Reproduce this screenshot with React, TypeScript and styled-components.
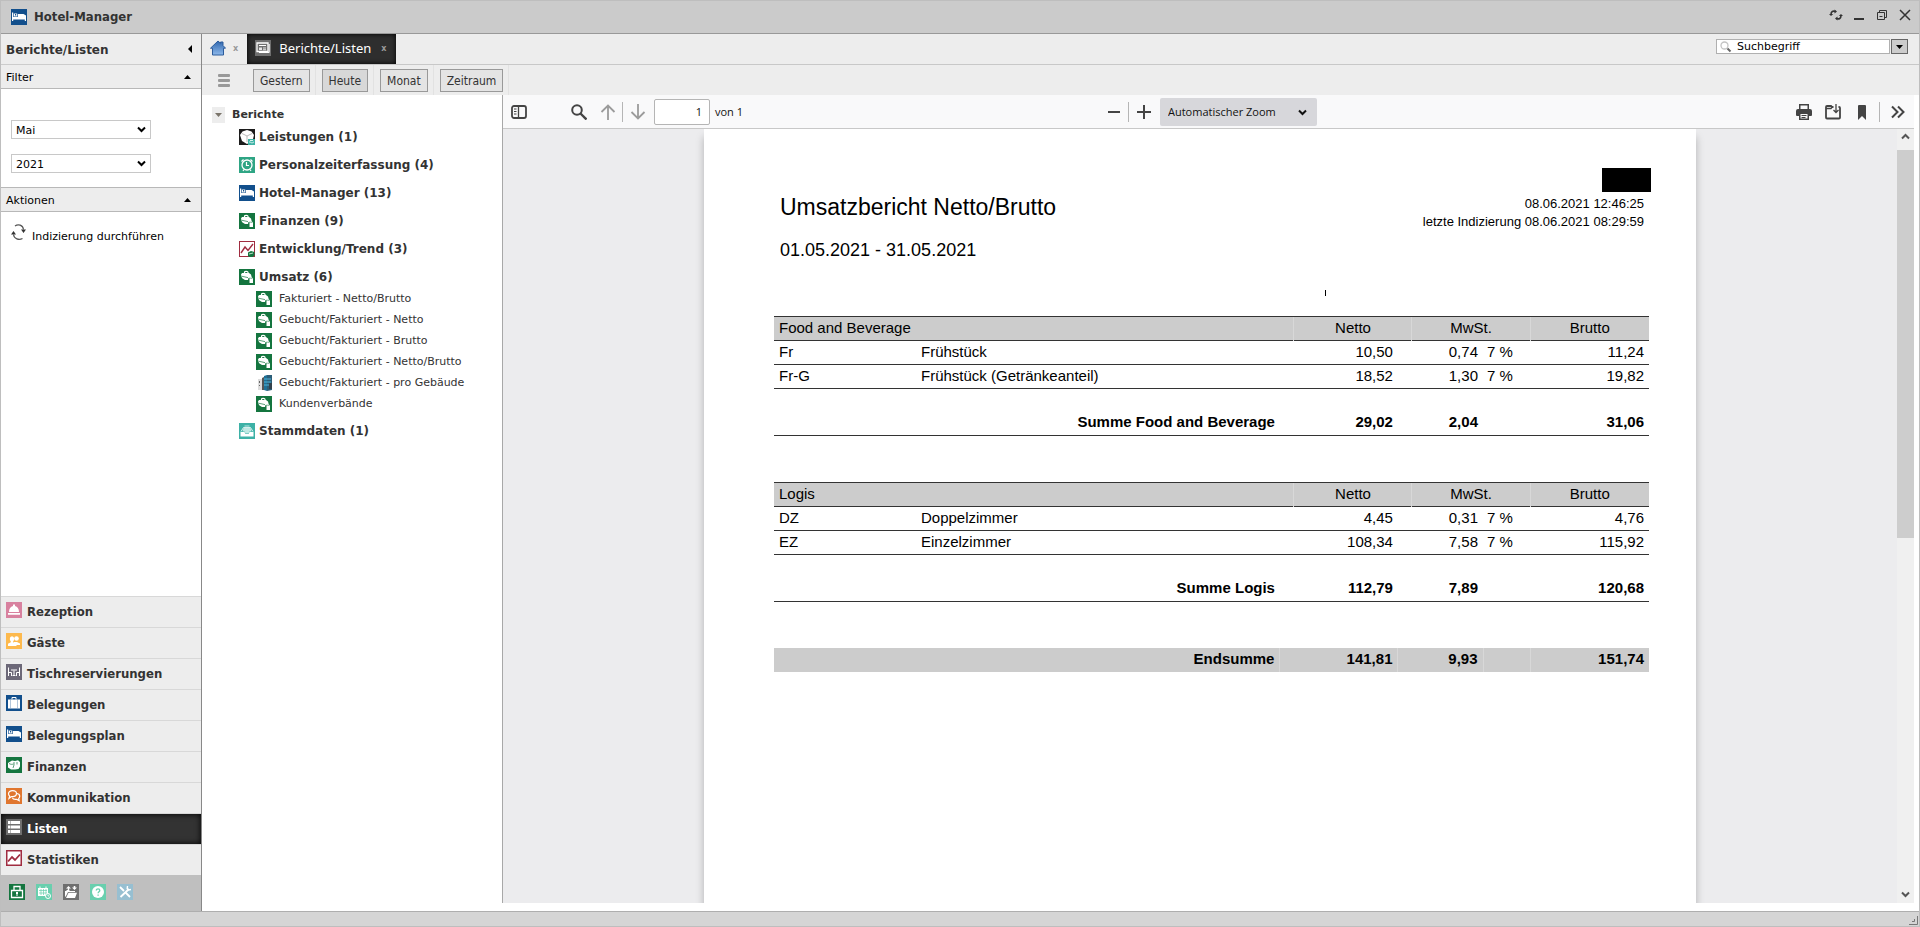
import React from 'react';
import styled, { createGlobalStyle } from 'styled-components';

const wide = '"DejaVu Sans", Verdana, sans-serif';
const narrow = '"DejaVu Sans Condensed", Tahoma, "DejaVu Sans", sans-serif';
const doc = '"Liberation Sans", Arial, sans-serif';
const humanist = '"Open Sans", "Segoe UI", sans-serif';

const GlobalStyle = createGlobalStyle`
  *, *::before, *::after { box-sizing: border-box; }
  html, body, #root { height: 100%; }
  body { margin: 0; background: #fff; color: #333; font-family: ${wide}; font-size: 11px; }
  button, select, input { font: inherit; color: inherit; margin: 0; border-radius: 0; }
  button { padding: 0; border: 0; background: none; cursor: pointer; }
  svg { display: block; flex: none; }
  ul { list-style: none; margin: 0; padding: 0; }
  h1, h2, p { margin: 0; }
`;

/* ---------- icons ---------- */

type IconName =
  | 'bed' | 'box' | 'clock' | 'cash' | 'trend' | 'building' | 'inbox' | 'bell' | 'guests' | 'dining'
  | 'case' | 'coins' | 'chat' | 'list' | 'stats' | 'lock' | 'calendar' | 'transfer' | 'help' | 'tools' | 'news';

const glyphs: Record<IconName, { bg: string; art: React.ReactNode }> = {
  bed: {
    bg: '#124f8c',
    art: (
      <>
        <path d="M1 3.500h1.200V8H15v4h-1.200v-1.500H2.200V12H1z" fill="#fff" />
        <path d="M2.800 4.500h3.400v3H2.800z" fill="#fff" />
        <path d="M4 5h1.200v1.500H4z" fill="#124f8c" />
        <path d="M6.800 5h5.700L15 6.500V8.500H6.800z" fill="#fff" />
      </>
    ),
  },
  box: {
    bg: '#1c1c1c',
    art: (
      <>
        <path d="M8 1l4.500 1.500L15 6l-1.500 6L8 15l-5-3L1 6l2.500-3.500z" fill="#fff" />
        <path d="M3 4.500l5 2.500 5-2.500M8 7v6" stroke="#aaa" fill="none" strokeWidth=".8" />
        <path d="M9 10h7v6H9z" fill="#3fb3a6" />
        <path d="M10 13h1.500l1 1h1l1-1H15M11 11.500h3" stroke="#fff" fill="none" strokeWidth=".8" />
      </>
    ),
  },
  clock: {
    bg: '#2ea584',
    art: (
      <g fill="none" stroke="#fff">
        <circle cx="8" cy="8" r="5" strokeWidth="1.300" />
        <path d="M7.500 5V8.500H10M2.500 4.500l2-2M13.500 4.500l-2-2M4 14l1-1.500M12 14l-1-1.500" strokeWidth="1.200" />
      </g>
    ),
  },
  cash: {
    bg: '#14753f',
    art: (
      <>
        <path d="M5.500 4.500V3.200C5.500 2 9 2 9 3.200v1.300" fill="none" stroke="#fff" strokeWidth="1.200" />
        <path d="M2 5.500L3 4h7l2 1.500.8 3-3.300.5-.5 2H6L3.500 9.500 2.500 8z" fill="#fff" />
        <path d="M2.500 7.200L9 8.600" stroke="#14753f" strokeWidth=".7" />
        <path d="M10.500 9.500h3.500V14h-3.500z" fill="#fff" />
        <path d="M11 9.500c0-1.200 2.500-1.200 2.500 0" fill="none" stroke="#fff" strokeWidth=".8" />
      </>
    ),
  },
  trend: {
    bg: '#a02c40',
    art: (
      <>
        <path d="M1 1h14v14H1z" fill="#fff" />
        <path d="M2 12l4-6 3 3.500 5-6.500" fill="none" stroke="#a02c40" strokeWidth="1.400" />
        <path d="M9 11.500l3-1.500 3.500 1v3.500L13.500 16H10l-1-1z" fill="#14753f" />
        <path d="M10 13l4-1" stroke="#b9dcc6" strokeWidth="1" />
      </>
    ),
  },
  building: {
    bg: 'transparent',
    art: (
      <>
        <path d="M2 4h4v11H2z" fill="#dcdcdc" />
        <path d="M3 6h1v2H3zM3 10h1v1H3z" fill="#666" />
        <path d="M6 3l2-1v13H6z" fill="#555" />
        <path d="M8 1l3-1v16l-3-1z" fill="#1f7096" />
        <path d="M11 0h5v15l-5 1z" fill="#2b5d77" />
        <path d="M8 4h7M8 7h7M8 10h5" stroke="#4fb4d9" />
        <path d="M13 8h3v6h-3z" fill="#33424c" />
      </>
    ),
  },
  inbox: {
    bg: '#3db1a6',
    art: (
      <>
        <path d="M1.500 9h4l1 2h3l1-2h4v4.500h-13z" fill="#fff" />
        <path d="M2 8.500l2.500-4h7l2.500 4" fill="none" stroke="#fff" strokeWidth=".8" />
        <path d="M4.500 5h7l1 3.500h-2l-1 2h-3l-1-2h-2z" fill="#bfe8e3" />
        <path d="M5.500 3h5" stroke="#bfe8e3" />
      </>
    ),
  },
  bell: {
    bg: '#d8819f',
    art: <path d="M7 2.500h2V4c2.500.5 4 3 4 6H3c0-3 1.500-5.500 4-6zM2 11h12v1.700H2z" fill="#fff" />,
  },
  guests: {
    bg: '#fdb94d',
    art: (
      <g fill="#fff">
        <circle cx="10.500" cy="5.500" r="2.300" />
        <path d="M8 9h3l3 1.500v1.500H8z" />
        <path d="M6 3.200a2.300 2.500 0 0 1 2.200 2.500c0 1.200-.4 1.900-1 2.600v.9l3.300 1.500v2.200H2v-2.200l2.800-1.500v-.9c-.6-.7-1-1.400-1-2.600A2.300 2.500 0 0 1 6 3.200z" />
      </g>
    ),
  },
  dining: {
    bg: '#6c6878',
    art: (
      <g stroke="#fff" fill="none">
        <path d="M5 6h6M8 6.500v4.500M6.500 11.500h3" />
        <path d="M2.500 3.500v8.500M2.500 8.500H5.500V12M13.500 3.500v8.500M13.500 8.500H10.500V12" />
      </g>
    ),
  },
  case: {
    bg: '#124f8c',
    art: (
      <>
        <path d="M2 4.500h12v9H2z" fill="#fff" />
        <path d="M6 4.500v-2h4v2" stroke="#fff" fill="none" />
        <path d="M4.500 4.500v9M11.500 4.500v9" stroke="#7e9fc2" strokeWidth=".6" />
      </>
    ),
  },
  coins: {
    bg: '#14753f',
    art: (
      <>
        <path d="M2 6l4-2.500L9 4l3-.8 2 1.800v4.500L12.500 12 9 12.500H5L2 10.500z" fill="#fff" />
        <path d="M3 6.500c1.500 1 3.500 1 4.500.5M8 5v3l-1 3M11 5v2.500" stroke="#14753f" fill="none" strokeWidth=".7" />
      </>
    ),
  },
  chat: {
    bg: '#e0762f',
    art: (
      <g stroke="#fff" fill="none" strokeWidth="1.200">
        <path d="M6.500 2.600c2.300 0 4 1.300 4 3s-1.700 3-4 3H5.500L3 10.500l.7-2.300C2.900 7.500 2.500 6.600 2.500 5.600c0-1.700 1.700-3 4-3z" />
        <path d="M11 5.500c1.600.3 2.700 1.300 2.700 2.700 0 .9-.4 1.600-1 2.200l.5 2.300-2.400-1.300H9.300c-1.500 0-2.500-.6-3-1.700" />
      </g>
    ),
  },
  list: {
    bg: '#6f6f6f',
    art: <path d="M2 2h2.500v3H2zM5 2h9v3H5zM2 6.500h2.500v3H2zM5 6.500h9v3H5zM2 11h2.500v3H2zM5 11h9v3H5z" fill="#fff" />,
  },
  stats: {
    bg: '#a02c40',
    art: (
      <>
        <path d="M1.500 1.500h13v13h-13z" fill="#fff" />
        <path d="M2 11.500l4-4.500 3 3 5-5.500" fill="none" stroke="#a02c40" strokeWidth="1.800" />
      </>
    ),
  },
  lock: {
    bg: '#14753f',
    art: (
      <>
        <path d="M2.500 6.500h11v7h-11zM5 6V2.500h6V6" stroke="#fff" fill="none" strokeWidth="1.300" />
        <path d="M7 8h2v2H8.500v2h-1v-2H7z" fill="#fff" />
      </>
    ),
  },
  calendar: {
    bg: '#69cfae',
    art: (
      <>
        <path d="M2 4h10v8H2z" fill="#fff" />
        <path d="M3 6.500h8M3 9h8M5 5v6M7.500 5v6M10 5v6" stroke="#69cfae" strokeWidth=".7" />
        <path d="M4 2.500V4M10 2.500V4" stroke="#fff" />
        <circle cx="12" cy="12" r="2.500" fill="#69cfae" stroke="#fff" />
        <path d="M12 10.500V12h1" stroke="#fff" fill="none" strokeWidth=".8" />
      </>
    ),
  },
  transfer: {
    bg: '#6f6f6f',
    art: (
      <path
        d="M2 7h1.500V6H6l1 1h5v1H5l-2 4-1 1zM5.500 8.800H14L12 14H3zM5.500 2L8 4.500H6.200V6H4.800V4.500H3zM11.500 6L14 3.500h-1.700V2h-1.600v1.500H9z"
        fill="#fff"
      />
    ),
  },
  help: {
    bg: '#69cfae',
    art: (
      <>
        <circle cx="8" cy="8" r="6" fill="#fff" />
        <path d="M6.300 6.500c0-2.200 3.500-2.200 3.500 0 0 1.300-1.700 1.300-1.700 2.700M8.100 10.500v1.300" stroke="#69cfae" fill="none" strokeWidth="1.300" />
      </>
    ),
  },
  tools: {
    bg: '#97bfd1',
    art: (
      <>
        <path d="M3 3l4 4M8.500 8.500L13 13" stroke="#fff" strokeWidth="1.800" />
        <path d="M12 5L3.500 13" stroke="#fff" strokeWidth="1.800" />
        <path d="M10.500 2l-.3 2.800 1.500 1.200L14 5.500" stroke="#fff" fill="none" strokeWidth="1.400" />
      </>
    ),
  },
  news: {
    bg: '#6f6f6f',
    art: (
      <>
        <path d="M2 3h11v8.500H2z" fill="none" stroke="#fff" strokeWidth="1.300" />
        <path d="M4 5.500h7M14.200 4v8.500H4" stroke="#fff" fill="none" />
        <path d="M4 7.500h3v2.500H4zM8 7.500h3v1H8zM8 9.300h3v1H8z" fill="#e6e6e6" />
      </>
    ),
  },
};

const Glyph = ({ name }: { name: IconName }) => (
  <svg width="16" height="16" viewBox="0 0 16 16" aria-hidden="true">
    <rect width="16" height="16" fill={glyphs[name].bg} />
    {glyphs[name].art}
  </svg>
);

const Triangle = ({ dir, color = '#000' }: { dir: 'up' | 'down' | 'left'; color?: string }) => {
  const d = { up: 'M1 6l3.500-4L8 6z', down: 'M1 2l3.500 4L8 2z', left: 'M6 0v8L2 4z' }[dir];
  return (
    <svg width="9" height="8" viewBox="0 0 9 8" aria-hidden="true">
      <path d={d} fill={color} />
    </svg>
  );
};

const HomeIcon = () => (
  <svg width="16" height="16" viewBox="0 0 16 16" aria-hidden="true">
    <defs>
      <linearGradient id="house" x1="0" y1="0" x2="0" y2="1">
        <stop offset="0" stopColor="#2f66ad" />
        <stop offset="1" stopColor="#8db8ea" />
      </linearGradient>
    </defs>
    <path d="M8 1l2.500 2.300V2H13v3.500l2.500 2.700H13.500V15h-11V8.200H.5z" fill="url(#house)" stroke="#2c5c9c" />
  </svg>
);

const ReloadIcon = () => (
  <svg width="16" height="16" viewBox="0 0 16 16" fill="none" stroke="#555" strokeWidth="1.200" aria-hidden="true">
    <path d="M4 2C7-.3 12 .8 12.500 5.500M11.500 14.500C8 16.300 3 15 2.500 10.500" />
    <path d="M10 5.500h5L12.500 9zM0 10.500h5L2.500 7z" fill="#333" stroke="none" />
  </svg>
);

/* ---------- window ---------- */

const Window = styled.div`
  display: flex;
  flex-direction: column;
  min-height: 100vh;
  border: 1px solid #bebebe;
`;
const TitleBar = styled.header`
  display: flex;
  align-items: center;
  height: 33px;
  padding: 0 6px 0 10px;
  gap: 7px;
  background: #cbcbcb;
  border-bottom: 1px solid #999;
`;
const WindowTitle = styled.h1`
  flex: 1;
  font: bold 13px/18px ${narrow};
`;
const WindowButton = styled.button`
  width: 16px;
  height: 16px;
  display: grid;
  place-items: start center;
`;
const Body = styled.div`
  display: flex;
  flex: 1;
`;
const StatusBar = styled.footer`
  height: 15px;
  display: flex;
  align-items: flex-end;
  justify-content: flex-end;
  background: #d5d5d5;
  border-top: 1px solid #aeaeae;
`;

/* ---------- sidebar ---------- */

const Sidebar = styled.aside`
  width: 201px;
  flex: none;
  display: flex;
  flex-direction: column;
  border-right: 1px solid #888;
  color: #000;
`;
const SidebarHead = styled.div<{ $main?: boolean }>`
  display: flex;
  align-items: center;
  justify-content: space-between;
  height: ${(p) => (p.$main ? 31 : 24)}px;
  padding: 0 ${(p) => (p.$main ? 6 : 9)}px 0 5px;
  background: #ededed;
  border-bottom: 1px solid ${(p) => (p.$main ? '#ccc' : '#b8b8b8')};
  h2 {
    padding-top: 2px;
    font-size: ${(p) => (p.$main ? 12 : 11)}px;
    line-height: 16px;
    font-weight: ${(p) => (p.$main ? 'bold' : 'normal')};
    color: ${(p) => (p.$main ? '#333' : '#000')};
  }
`;
const Filters = styled.div`
  display: flex;
  flex-direction: column;
  gap: 15px;
  padding: 31px 10px 14px;
  border-bottom: 1px solid #b8b8b8;
`;
const SelectShell = styled.label`
  position: relative;
  width: 140px;
  svg {
    position: absolute;
    right: 5px;
    top: 5px;
    pointer-events: none;
  }
`;
const FilterSelect = styled.select`
  display: block;
  appearance: none;
  width: 100%;
  height: 19px;
  padding: 2px 20px 0 4px;
  border: 1px solid #c8c8c8;
  background: #fff;
  outline: none;
`;
const ActionArea = styled.div`
  flex: 1;
  padding: 12px 10px;
`;
const Action = styled.button`
  display: flex;
  align-items: flex-start;
  gap: 5px;
  line-height: 25px;
`;
const NavItem = styled.a<{ $active?: boolean }>`
  display: flex;
  gap: 5px;
  height: 31px;
  padding: 5px 5px 0;
  text-decoration: none;
  border-top: 1px solid #d8d8d8;
  font: bold 13px/20px ${narrow};
  color: ${(p) => (p.$active ? '#fff' : '#333')};
  background: ${(p) => (p.$active ? '#333' : '#ededed')};
  box-shadow: ${(p) => (p.$active ? 'inset 0 0 6px #000' : 'none')};
`;
const QuickBar = styled.div`
  display: flex;
  align-items: flex-start;
  gap: 11px;
  height: 36px;
  padding: 9px 8px 0;
  background: #bfbfbf;
`;

/* ---------- main ---------- */

const Main = styled.main`
  flex: 1;
  min-width: 0;
  display: flex;
  flex-direction: column;
`;
const TabBar = styled.div`
  display: flex;
  height: 31px;
  background: #ededed;
  border-bottom: 1px solid #c8c8c8;
`;
const Tab = styled.div<{ $active?: boolean }>`
  display: flex;
  align-items: center;
  height: 30px;
  padding: 0 9px 2px 8px;
  gap: ${(p) => (p.$active ? 8 : 5)}px;
  font: 13px/18px "Noto Sans", sans-serif;
  color: #fff;
  background: ${(p) => (p.$active ? '#2e2e2e' : 'transparent')};
  box-shadow: ${(p) => (p.$active ? 'inset 0 0 5px #000' : 'none')};
`;
const TabClose = styled.button`
  font: bold 9px/12px ${narrow};
  color: #999;
  margin-left: 2px;
`;
const SearchBox = styled.form`
  display: flex;
  gap: 1px;
  margin: 5px 11px 0 auto;
  height: 15px;
`;
const SearchField = styled.label`
  display: flex;
  align-items: center;
  gap: 5px;
  width: 174px;
  padding-left: 3px;
  background: #fff;
  border: 1px solid #b0b0b0;
  color: #000;
  input {
    width: 100%;
    height: 13px;
    padding: 0;
    border: 0;
    outline: 0;
    background: none;
  }
`;
const SearchMenu = styled.button`
  width: 17px;
  display: grid;
  place-items: center;
  background: #ccc;
  border: 1px solid #666;
`;
const ToolBar = styled.div`
  display: flex;
  align-items: center;
  height: 30px;
  background: #ededed;
`;
const MenuButton = styled.button`
  margin: 0 11px 0 10px;
  padding: 0 6px;
`;
const ToolCell = styled.div`
  display: flex;
  align-items: center;
  height: 30px;
  padding: 0 5px 0 6px;
  border-right: 1px solid #e2e2e2;
`;
const ToolButton = styled.button<{ $on?: boolean }>`
  height: 23px;
  padding: 1px 6px 0;
  border: 1px solid #999;
  background: ${(p) => (p.$on ? '#d8d8d8' : '#e4e4e4')};
  font: 12px/18px ${narrow};
`;
const Work = styled.div`
  flex: 1;
  display: flex;
`;

/* ---------- report tree ---------- */

const Tree = styled.nav`
  width: 300px;
  flex: none;
  padding: 11px 10px 10px;
`;
const Root = styled.div`
  display: flex;
  align-items: center;
  gap: 7px;
  height: 17px;
  line-height: 14px;
  font-weight: bold;
`;
const Toggle = styled.button`
  width: 13px;
  height: 16px;
  display: grid;
  place-items: center;
  background: #ededed;
`;
const Branch = styled.li`
  padding: 6px 0 0 27px;
`;
const BranchLink = styled.a`
  display: flex;
  gap: 4px;
  height: 22px;
  font-size: 12px;
  line-height: 16px;
  font-weight: bold;
  color: #333;
  text-decoration: none;
`;
const Leaf = styled.a`
  display: flex;
  gap: 7px;
  height: 21px;
  margin-left: 17px;
  line-height: 16px;
  color: #333;
  text-decoration: none;
`;

/* ---------- document viewer ---------- */

const Viewer = styled.section`
  flex: 1;
  min-width: 0;
  display: flex;
  flex-direction: column;
  margin: 0 5px 8px 0;
  border-left: 1px solid #a8a8a8;
`;
const ViewerBar = styled.div`
  display: grid;
  grid-template-columns: 1fr auto 1fr;
  align-items: center;
  height: 34px;
  padding: 0 2px 0 1px;
  background: #f9f9fa;
  border-bottom: 1px solid #c8c8c8;
  font: 11px/18px ${humanist};
  color: #111;
`;
const BarGroup = styled.div<{ $end?: boolean }>`
  display: flex;
  align-items: center;
  justify-content: ${(p) => (p.$end ? 'flex-end' : 'flex-start')};
`;
const BarButton = styled.button<{ $dim?: boolean }>`
  width: 29px;
  height: 28px;
  display: grid;
  place-items: center;
  color: ${(p) => (p.$dim ? '#9b9b9b' : '#444')};
`;
const Divider = styled.span<{ $wide?: boolean }>`
  width: 1px;
  height: 20px;
  margin: 0 ${(p) => (p.$wide ? 3 : 0)}px;
  background: #b5b5b5;
`;
const Spacer = styled.span`
  width: 31px;
`;
const PageInput = styled.input`
  width: 56px;
  height: 26px;
  margin: 0 5px 0 2px;
  padding: 0 7px;
  border: 1px solid #b5b5b5;
  border-radius: 2px;
  background: #fff;
  text-align: right;
`;
const ZoomShell = styled.label`
  position: relative;
  margin-left: 2px;
  svg {
    position: absolute;
    right: 10px;
    top: 10px;
    pointer-events: none;
  }
`;
const ZoomSelect = styled.select`
  display: block;
  appearance: none;
  width: 157px;
  height: 28px;
  padding: 0 24px 0 8px;
  border: 0;
  border-radius: 2px;
  background: #d7d7db;
`;
const Canvas = styled.div`
  flex: 1;
  display: flex;
  background: #ececee;
`;
const Sheet = styled.article`
  width: 100%;
  max-width: 992px;
  margin: 0 auto;
  padding: 39px 47px 0 70px;
  background: #fff;
  box-shadow: 0 8px 8px rgba(0, 0, 0, 0.25);
  clip-path: inset(0 -10px 0 -10px);
  font-family: ${doc};
  color: #000;
`;
const ScrollTrack = styled.div`
  width: 17px;
  flex: none;
  display: flex;
  flex-direction: column;
  align-items: center;
  background: #f0f0f0;
  color: #555;
`;
const ScrollButton = styled.button<{ $end?: boolean }>`
  width: 17px;
  height: 21px;
  padding: ${(p) => (p.$end ? '4px 0 0' : '0 0 6px')};
  display: grid;
  place-items: center;
`;
const ScrollArea = styled.div`
  flex: 1;
  width: 100%;
`;
const Thumb = styled.div`
  height: 53%;
  background: #cdcdcd;
`;
const ReportHead = styled.header`
  display: flex;
  justify-content: space-between;
  padding-left: 6px;
  height: 122px;
`;
const Titles = styled.div`
  padding-top: 24px;
  h2 { font: 23px/30px ${doc}; margin-bottom: 16px; }
  p { font-size: 18px; line-height: 24px; }
`;
const Stamp = styled.div`
  display: flex;
  flex-direction: column;
  align-items: flex-end;
  font-size: 13px;
  line-height: 18px;
  p { padding-right: 5px; }
`;
const Redaction = styled.div`
  width: 49px;
  height: 24px;
  margin: 0 -2px 3px 0;
  background: #000;
`;
const Caret = styled.div`
  width: 1px;
  height: 6px;
  margin: 0 0 20px 551px;
  background: #000;
`;
const Table = styled.table`
  width: 100%;
  table-layout: fixed;
  border-collapse: collapse;
  font-size: 15px;
  line-height: 18px;
  margin-bottom: 46px;
  th, td { height: 24px; padding: 0 5px 2px; text-align: left; white-space: nowrap; }
  td.num { text-align: right; }
  td.pct { padding: 0 4px 2px; }
  thead th {
    font-weight: normal;
    background: #ccc;
    border-top: 1px solid #333;
    text-align: center;
    & + th { border-left: 1px solid #d8d8d8; }
    &:first-child { text-align: left; }
  }
  thead tr, tbody tr { border-bottom: 1px solid #333; }
  tfoot { font-weight: bold; }
  tfoot th, tfoot td { height: 47px; padding-top: 22px; text-align: right; }
  tfoot tr { border-bottom: 1px solid #333; }
`;
const TotalTable = styled(Table)`
  tbody { font-weight: bold; }
  tbody tr { border: 0; background: #ccc; }
  tbody th { text-align: right; }
  td { border-left: 1px solid #d8d8d8; }
`;

const columns = [142, 364, 14, 104, 14, 71, 47, 119];
const Columns = () => (
  <colgroup>
    {columns.map((w, i) => (
      <col key={i} width={i === 1 ? undefined : w} />
    ))}
  </colgroup>
);

type Line = [code: string, name: string, net: string, tax: string, rate: string, gross: string];
const sections: { title: string; lines: Line[]; sum: [string, string, string] }[] = [
  {
    title: 'Food and Beverage',
    lines: [
      ['Fr', 'Frühstück', '10,50', '0,74', '7 %', '11,24'],
      ['Fr-G', 'Frühstück (Getränkeanteil)', '18,52', '1,30', '7 %', '19,82'],
    ],
    sum: ['29,02', '2,04', '31,06'],
  },
  {
    title: 'Logis',
    lines: [
      ['DZ', 'Doppelzimmer', '4,45', '0,31', '7 %', '4,76'],
      ['EZ', 'Einzelzimmer', '108,34', '7,58', '7 %', '115,92'],
    ],
    sum: ['112,79', '7,89', '120,68'],
  },
];

const Report = () => (
  <Sheet>
    <ReportHead>
      <Titles>
        <h2>Umsatzbericht Netto/Brutto</h2>
        <p>01.05.2021 - 31.05.2021</p>
      </Titles>
      <Stamp>
        <Redaction />
        <p>08.06.2021 12:46:25</p>
        <p>letzte Indizierung 08.06.2021 08:29:59</p>
      </Stamp>
    </ReportHead>
    <Caret />
    {sections.map((s) => (
      <Table key={s.title}>
        <Columns />
        <thead>
          <tr>
            <th colSpan={3}>{s.title}</th>
            <th colSpan={2}>Netto</th>
            <th colSpan={2}>MwSt.</th>
            <th>Brutto</th>
          </tr>
        </thead>
        <tbody>
          {s.lines.map(([code, name, net, tax, rate, gross]) => (
            <tr key={code}>
              <td>{code}</td>
              <td>{name}</td>
              <td className="num" colSpan={2}>{net}</td>
              <td className="num" colSpan={2}>{tax}</td>
              <td className="pct">{rate}</td>
              <td className="num">{gross}</td>
            </tr>
          ))}
        </tbody>
        <tfoot>
          <tr>
            <th colSpan={2}>Summe {s.title}</th>
            <td colSpan={2}>{s.sum[0]}</td>
            <td colSpan={2}>{s.sum[1]}</td>
            <td />
            <td>{s.sum[2]}</td>
          </tr>
        </tfoot>
      </Table>
    ))}
    <TotalTable>
      <Columns />
      <tbody>
        <tr>
          <th colSpan={2}>Endsumme</th>
          <td className="num" colSpan={2}>141,81</td>
          <td className="num" colSpan={2}>9,93</td>
          <td />
          <td className="num">151,74</td>
        </tr>
      </tbody>
    </TotalTable>
  </Sheet>
);

const Chevron = ({ up }: { up?: boolean }) => (
  <svg width="9" height="9" viewBox="0 0 9 9" fill="none" stroke="currentColor" strokeWidth="2" aria-hidden="true">
    <path d={up ? 'M1 6.500l3.500-3.500L8 6.500' : 'M1 2.500L4.500 6 8 2.500'} />
  </svg>
);

const Line16 = ({ children, w = 2 }: { children: React.ReactNode; w?: number }) => (
  <svg width="16" height="16" viewBox="0 0 16 16" fill="none" stroke="currentColor" strokeWidth={w} aria-hidden="true">
    {children}
  </svg>
);

const ViewerToolbar = () => (
  <ViewerBar>
    <BarGroup>
      <BarButton aria-label="Seitenleiste">
        <Line16 w={1.8}>
          <rect x="1" y="2" width="14" height="12" rx="2" />
          <path d="M7.500 2v12" strokeWidth="1.300" />
          <path d="M3 5h2.500M3 7.500h2.500M3 10h2.500" strokeWidth="1" />
        </Line16>
      </BarButton>
      <Spacer />
      <BarButton aria-label="Suchen">
        <Line16 w={2}>
          <circle cx="6" cy="6" r="4.800" />
          <path d="M9.500 9.500l6 6" strokeWidth="2.400" />
        </Line16>
      </BarButton>
      <BarButton $dim aria-label="Vorherige Seite">
        <Line16 w={1.8}><path d="M8 16V2M1.500 8L8 1.500 14.500 8" /></Line16>
      </BarButton>
      <Divider />
      <BarButton $dim aria-label="Nächste Seite">
        <Line16 w={1.8}><path d="M8 0v14M1.500 8L8 14.500 14.500 8" /></Line16>
      </BarButton>
      <PageInput aria-label="Seite" defaultValue="1" />
      <span>von 1</span>
    </BarGroup>
    <BarGroup>
      <BarButton aria-label="Verkleinern">
        <Line16><path d="M2 8h12" /></Line16>
      </BarButton>
      <Divider />
      <BarButton aria-label="Vergrößern">
        <Line16><path d="M1 8h14M8 1v14" /></Line16>
      </BarButton>
      <ZoomShell>
        <ZoomSelect aria-label="Zoom">
          <option>Automatischer Zoom</option>
        </ZoomSelect>
        <Chevron />
      </ZoomShell>
    </BarGroup>
    <BarGroup $end>
      <BarButton aria-label="Drucken">
        <svg width="16" height="16" viewBox="0 0 16 16" fill="currentColor" aria-hidden="true">
          <path d="M3 0h10v5H3zM4.500 1.500V5h7V1.500zM2 5h12a2 2 0 0 1 2 2v4a1 1 0 0 1-1 1h-2V9H3v3H1a1 1 0 0 1-1-1V7a2 2 0 0 1 2-2z" fillRule="evenodd" />
          <path d="M3 9h10v7H3zM4.500 10v4.500h7V10z" fillRule="evenodd" />
          <path d="M5.500 11h5v1h-5zM5.500 13h4v1h-4z" />
        </svg>
      </BarButton>
      <BarButton aria-label="Herunterladen">
        <Line16 w={1.8}>
          <path d="M8.500 3H7L6 2H2a1 1 0 0 0-1 1v10.500a1 1 0 0 0 1 1h12a1 1 0 0 0 1-1V4a1 1 0 0 0-1-1h-.5" />
          <path d="M1 4.500h5l1-1.200" strokeWidth="1.300" />
          <path d="M11 0v8M8.500 6L11 8.500 13.500 6" strokeWidth="1.300" />
        </Line16>
      </BarButton>
      <BarButton aria-label="Lesezeichen">
        <svg width="10" height="16" viewBox="0 0 10 16" fill="currentColor" aria-hidden="true">
          <path d="M1 2a1 1 0 0 1 1-1h6a1 1 0 0 1 1 1v14l-4-4-4 4z" />
        </svg>
      </BarButton>
      <Divider $wide />
      <BarButton aria-label="Werkzeuge">
        <Line16><path d="M2 2.500L7.500 8 2 13.500M8 2.500L13.500 8 8 13.500" /></Line16>
      </BarButton>
    </BarGroup>
  </ViewerBar>
);

/* ---------- data ---------- */

const modules: { label: string; icon: IconName; active?: boolean }[] = [
  { label: 'Rezeption', icon: 'bell' },
  { label: 'Gäste', icon: 'guests' },
  { label: 'Tischreservierungen', icon: 'dining' },
  { label: 'Belegungen', icon: 'case' },
  { label: 'Belegungsplan', icon: 'bed' },
  { label: 'Finanzen', icon: 'coins' },
  { label: 'Kommunikation', icon: 'chat' },
  { label: 'Listen', icon: 'list', active: true },
  { label: 'Statistiken', icon: 'stats' },
];

const branches: { label: string; icon: IconName; leaves?: { label: string; icon: IconName }[] }[] = [
  { label: 'Leistungen (1)', icon: 'box' },
  { label: 'Personalzeiterfassung (4)', icon: 'clock' },
  { label: 'Hotel-Manager (13)', icon: 'bed' },
  { label: 'Finanzen (9)', icon: 'cash' },
  { label: 'Entwicklung/Trend (3)', icon: 'trend' },
  {
    label: 'Umsatz (6)',
    icon: 'cash',
    leaves: [
      { label: 'Fakturiert - Netto/Brutto', icon: 'cash' },
      { label: 'Gebucht/Fakturiert - Netto', icon: 'cash' },
      { label: 'Gebucht/Fakturiert - Brutto', icon: 'cash' },
      { label: 'Gebucht/Fakturiert - Netto/Brutto', icon: 'cash' },
      { label: 'Gebucht/Fakturiert - pro Gebäude', icon: 'building' },
      { label: 'Kundenverbände', icon: 'cash' },
    ],
  },
  { label: 'Stammdaten (1)', icon: 'inbox' },
];

const quick: { label: string; icon: IconName }[] = [
  { label: 'Sperren', icon: 'lock' },
  { label: 'Kalender', icon: 'calendar' },
  { label: 'Dateien', icon: 'transfer' },
  { label: 'Hilfe', icon: 'help' },
  { label: 'Einstellungen', icon: 'tools' },
];

export default function App() {
  return (
    <>
      <GlobalStyle />
      <Window>
        <TitleBar>
          <Glyph name="bed" />
          <WindowTitle>Hotel-Manager</WindowTitle>
          <WindowButton aria-label="Neu laden">
            <svg width="14" height="12" viewBox="0 0 14 12" fill="none" stroke="#333" strokeWidth="1.600" aria-hidden="true">
              <path d="M6.500 2.500C4 1.500 2 2.500 2 5.500M7.500 9.500c2.500 1 4.500 0 4.500-3" />
              <path d="M5.500.5l2.500 2-2.500 2zM8.500 7.500l-2.500 2 2.500 2zM0 5h4.200L2 7zM14 7H9.800L12 5z" fill="#333" stroke="none" />
            </svg>
          </WindowButton>
          <WindowButton aria-label="Minimieren">
            <svg width="12" height="12" viewBox="0 0 12 12" aria-hidden="true"><path d="M1 9h10v2H1z" fill="#333" /></svg>
          </WindowButton>
          <WindowButton aria-label="Wiederherstellen">
            <svg width="12" height="12" viewBox="0 0 12 12" fill="none" stroke="#333" aria-hidden="true">
              <path d="M3.500 3V1.500h7v7H9M1.500 3.500h7v7h-7zM3.500 7.500h3" />
            </svg>
          </WindowButton>
          <WindowButton aria-label="Schließen">
            <svg width="12" height="12" viewBox="0 0 12 12" stroke="#333" strokeWidth="1.500" aria-hidden="true">
              <path d="M1 1l10 10M11 1L1 11" />
            </svg>
          </WindowButton>
        </TitleBar>
        <Body>
          <Sidebar>
            <SidebarHead $main>
              <h2>Berichte/Listen</h2>
              <button aria-label="Einklappen"><Triangle dir="left" /></button>
            </SidebarHead>
            <SidebarHead>
              <h2>Filter</h2>
              <button aria-label="Filter einklappen"><Triangle dir="up" /></button>
            </SidebarHead>
            <Filters>
              <SelectShell>
                <FilterSelect aria-label="Monat"><option>Mai</option></FilterSelect>
                <Chevron />
              </SelectShell>
              <SelectShell>
                <FilterSelect aria-label="Jahr"><option>2021</option></FilterSelect>
                <Chevron />
              </SelectShell>
            </Filters>
            <SidebarHead>
              <h2>Aktionen</h2>
              <button aria-label="Aktionen einklappen"><Triangle dir="up" /></button>
            </SidebarHead>
            <ActionArea>
              <Action>
                <ReloadIcon />
                Indizierung durchführen
              </Action>
            </ActionArea>
            <nav>
              {modules.map((m) => (
                <NavItem key={m.label} href="#" $active={m.active}>
                  <Glyph name={m.icon} />
                  {m.label}
                </NavItem>
              ))}
            </nav>
            <QuickBar>
              {quick.map((q) => (
                <button key={q.label} aria-label={q.label}><Glyph name={q.icon} /></button>
              ))}
            </QuickBar>
          </Sidebar>
          <Main>
            <TabBar>
              <Tab>
                <HomeIcon />
                <TabClose aria-label="Startseite schließen">x</TabClose>
              </Tab>
              <Tab $active>
                <Glyph name="news" />
                <span>Berichte/Listen</span>
                <TabClose aria-label="Berichte schließen">x</TabClose>
              </Tab>
              <SearchBox>
                <SearchField>
                  <svg width="12" height="12" viewBox="0 0 12 12" fill="none" aria-hidden="true">
                    <circle cx="4.500" cy="4.500" r="3.500" stroke="#c4c4c4" strokeWidth="1.300" />
                    <path d="M7.500 7.500L10.500 10.500" stroke="#666" strokeWidth="2" />
                  </svg>
                  <input aria-label="Suche" defaultValue="Suchbegriff" />
                </SearchField>
                <SearchMenu type="button" aria-label="Suchoptionen"><Triangle dir="down" /></SearchMenu>
              </SearchBox>
            </TabBar>
            <ToolBar>
              <MenuButton aria-label="Menü">
                <svg width="12" height="13" viewBox="0 0 12 13" fill="#999" aria-hidden="true">
                  <rect width="12" height="3" rx="1" />
                  <rect y="5" width="12" height="3" rx="1" />
                  <rect y="10" width="12" height="3" rx="1" />
                </svg>
              </MenuButton>
              {['Gestern', 'Heute', 'Monat', 'Zeitraum'].map((t) => (
                <ToolCell key={t}>
                  <ToolButton $on={t === 'Heute'}>{t}</ToolButton>
                </ToolCell>
              ))}
            </ToolBar>
            <Work>
              <Tree aria-label="Berichte">
                <Root>
                  <Toggle aria-label="Berichte einklappen"><Triangle dir="down" color="#7b756b" /></Toggle>
                  Berichte
                </Root>
                <ul>
                  {branches.map((b) => (
                    <Branch key={b.label}>
                      <BranchLink href="#">
                        <Glyph name={b.icon} />
                        {b.label}
                      </BranchLink>
                      {b.leaves?.map((l) => (
                        <Leaf key={l.label} href="#">
                          <Glyph name={l.icon} />
                          {l.label}
                        </Leaf>
                      ))}
                    </Branch>
                  ))}
                </ul>
              </Tree>
              <Viewer>
                <ViewerToolbar />
                <Canvas>
                  <Report />
                  <ScrollTrack>
                    <ScrollButton aria-label="Nach oben"><Chevron up /></ScrollButton>
                    <ScrollArea><Thumb /></ScrollArea>
                    <ScrollButton $end aria-label="Nach unten"><Chevron /></ScrollButton>
                  </ScrollTrack>
                </Canvas>
              </Viewer>
            </Work>
          </Main>
        </Body>
        <StatusBar>
          <svg width="10" height="10" viewBox="0 0 10 10" fill="none" stroke="#777" aria-hidden="true">
            <path d="M0 8.500h8.500V0M3 5.500h2.500V3" />
          </svg>
        </StatusBar>
      </Window>
    </>
  );
}
